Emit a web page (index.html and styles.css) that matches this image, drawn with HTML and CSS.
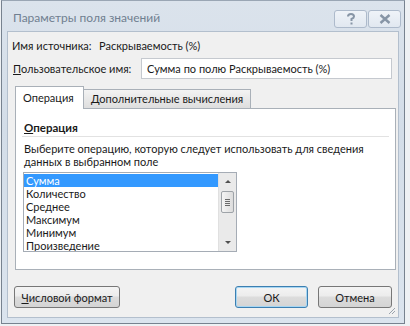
FILE: index.html
```html
<!DOCTYPE html>
<html lang="ru">
<head>
    <meta charset="UTF-8">
    <title>Параметры поля значений</title>
    <link rel="stylesheet" href="styles.css">
</head>
<body>
    <div class="window">
        <div class="titlebar">
            <span class="title">Параметры поля значений</span>
            <div class="caption-buttons">
                <span class="cap-btn">
                    <svg width="10" height="12" viewBox="0 0 10 12"><path d="M2 3.5 Q2 1 5 1 Q8 1 8 3.5 Q8 5 5.5 6 L5.5 8" fill="none" stroke="#8795a6" stroke-width="2"/><rect x="4.5" y="9.5" width="2" height="2" fill="#8795a6"/></svg>
                </span>
                <span class="cap-btn">
                    <svg width="12" height="10" viewBox="0 0 12 10"><path d="M1.5 1 L10.5 9 M10.5 1 L1.5 9" stroke="#8795a6" stroke-width="2.4"/></svg>
                </span>
            </div>
        </div>

        <div class="client">
            <div class="row source">
                <span class="source-label">Имя источника:</span>
                <span>Раскрываемость (%)</span>
            </div>

            <div class="row custom">
                <label for="name"><u>П</u>ользовательское имя:</label>
                <input id="name" type="text" value="Сумма по полю Раскрываемость (%)">
            </div>

            <div class="tabs">
                <div class="tab active">Операция</div>
                <div class="tab">Дополнительные вычисления</div>
            </div>

            <div class="panel">
                <div class="group-title"><u>О</u>перация</div>
                <p class="hint">Выберите операцию, которую следует использовать для сведения<br>данных в выбранном поле</p>
                <div class="listbox">
                    <ul class="items">
                        <li class="selected">Сумма</li>
                        <li>Количество</li>
                        <li>Среднее</li>
                        <li>Максимум</li>
                        <li>Минимум</li>
                        <li>Произведение</li>
                    </ul>
                    <div class="scrollbar">
                        <span class="arrow up"></span>
                        <span class="thumb"><i></i><i></i><i></i><i></i></span>
                        <span class="arrow down"></span>
                    </div>
                </div>
            </div>

            <div class="footer">
                <button class="btn format"><u>Ч</u>исловой формат</button>
                <span class="spacer"></span>
                <button class="btn ok">ОК</button>
                <button class="btn">Отмена</button>
            </div>

            <span class="grip">
                <svg width="8" height="8" viewBox="0 0 8 8"><path d="M7 1 L1 7 M7 4 L4 7" stroke="#9aa3ad" stroke-width="1"/></svg>
            </span>
        </div>
    </div>
</body>
</html>
```

FILE: styles.css
```css
body {
    margin: 0;
    background: #eef1f4;
    font-family: Lato, "Noto Sans", sans-serif;
    font-size: 11px;
    color: #1a1a1a;
}
.window {
    width: 402px;
    height: 322px;
    margin-left: 1px;
    border: 1px solid #77828f;
    border-top-color: #9aa6b4;
    background: linear-gradient(#dbe3ec, #d3dde8 40%, #dbe4ee);
    display: flex;
    flex-direction: column;
}
.titlebar {
    height: 30px;
    display: flex;
    align-items: center;
    justify-content: space-between;
    padding: 0 3px 0 11px;
}
.title {
    font-size: 12px;
    color: #707f90;
    margin-top: 3px;
}
.caption-buttons {
    display: flex;
    gap: 1px;
    align-self: flex-start;
    margin-top: 9px;
}
.cap-btn {
    width: 31px;
    height: 16px;
    border: 1px solid #adbacb;
    border-radius: 3px;
    background: linear-gradient(#eff3f8, #e1e8f0);
    display: flex;
    align-items: center;
    justify-content: center;
}
.client {
    position: relative;
    flex: 1;
    margin: 0 5px 5px 5px;
    border: 1px solid #b3bfcd;
    background: #f0f0f0;
    padding: 0 6px 0 5px;
}
.row {
    display: flex;
    align-items: center;
}
.source {
    margin-top: 6px;
    height: 14px;
    margin-left: -1px;
}
.source-label {
    width: 87px;
    flex-shrink: 0;
}
.custom {
    margin-top: 6px;
}
.custom label {
    width: 128px;
    flex-shrink: 0;
}
.custom input {
    width: 253px;
    height: 21px;
    box-sizing: border-box;
    border: 1px solid #c5c9cf;
    background: #fff;
    font: inherit;
    padding: 0 5px;
    color: #1a1a1a;
}
.tabs {
    display: flex;
    align-items: flex-end;
    margin: 7px 0 0 2px;
    height: 22px;
    position: relative;
    z-index: 1;
}
.tab {
    height: 19px;
    line-height: 18px;
    padding: 0 7px;
    border: 1px solid #a9b0b8;
    border-bottom: none;
    background: linear-gradient(#f3f3f3, #dedede);
    box-sizing: border-box;
}
.tab.active {
    height: 23px;
    margin-bottom: -1px;
    background: #fff;
    width: 69px;
    padding: 2px 0 0 7px;
}
.tab + .tab {
    border-left: none;
}
.panel {
    width: 381px;
    height: 162px;
    box-sizing: border-box;
    margin-left: 2px;
    border: 1px solid #a9b0b8;
    background: #fff;
    padding: 0 6px 0 6px;
}
.group-title {
    font-weight: bold;
    font-size: 11.5px;
    margin-top: 12px;
    line-height: 14px;
    padding: 0 0 1px 2px;
    border-bottom: 1px solid #e2e2e2;
}
.hint {
    margin: 5px 0 0 2px;
    line-height: 13px;
}
.listbox {
    display: flex;
    width: 214px;
    height: 80px;
    box-sizing: border-box;
    margin: 4px 0 0 1px;
    border: 1px solid #a5acb5;
    overflow: hidden;
}
.items {
    flex: 1;
    list-style: none;
    margin: 0;
    padding: 1px 0 0 0;
}
.items li {
    height: 13px;
    line-height: 13px;
    padding-left: 2px;
}
.items li.selected {
    background: #3399ff;
    color: #fff;
}
.scrollbar {
    width: 17px;
    background: #eaeaea;
    border-left: 1px solid #e0e0e0;
    display: flex;
    flex-direction: column;
    align-items: center;
}
.arrow {
    width: 0;
    height: 0;
    border-left: 3px solid transparent;
    border-right: 3px solid transparent;
}
.arrow.up {
    margin-top: 7px;
    border-bottom: 3px solid #505050;
}
.arrow.down {
    margin-top: auto;
    margin-bottom: 7px;
    border-top: 3px solid #505050;
}
.thumb {
    margin-top: 8px;
    width: 13px;
    height: 22px;
    box-sizing: border-box;
    border: 1px solid #9ea3a8;
    border-radius: 2px;
    background: linear-gradient(90deg, #f4f4f4, #dcdcdc);
    display: flex;
    flex-direction: column;
    align-items: center;
    justify-content: center;
    gap: 1px;
}
.thumb i {
    display: block;
    width: 5px;
    height: 1px;
    background: #6a6a6a;
}
.footer {
    display: flex;
    gap: 10px;
    margin: 16px 0 0 0;
}
.spacer {
    flex: 1;
}
.btn {
    height: 22px;
    width: 74px;
    font: inherit;
    color: #1a1a1a;
    border: 1px solid #777;
    border-radius: 3px;
    background: linear-gradient(#f4f4f4, #ececec 45%, #dcdcdc 50%, #d4d4d4);
    padding: 0;
}
.btn.format {
    width: 106px;
    margin-left: 1px;
}
.btn.ok {
    width: 73px;
    border-color: #3c7fb1;
    box-shadow: inset 0 0 0 1px #a7d6f2;
}
.grip {
    position: absolute;
    right: 2px;
    bottom: 2px;
    line-height: 0;
}
```
